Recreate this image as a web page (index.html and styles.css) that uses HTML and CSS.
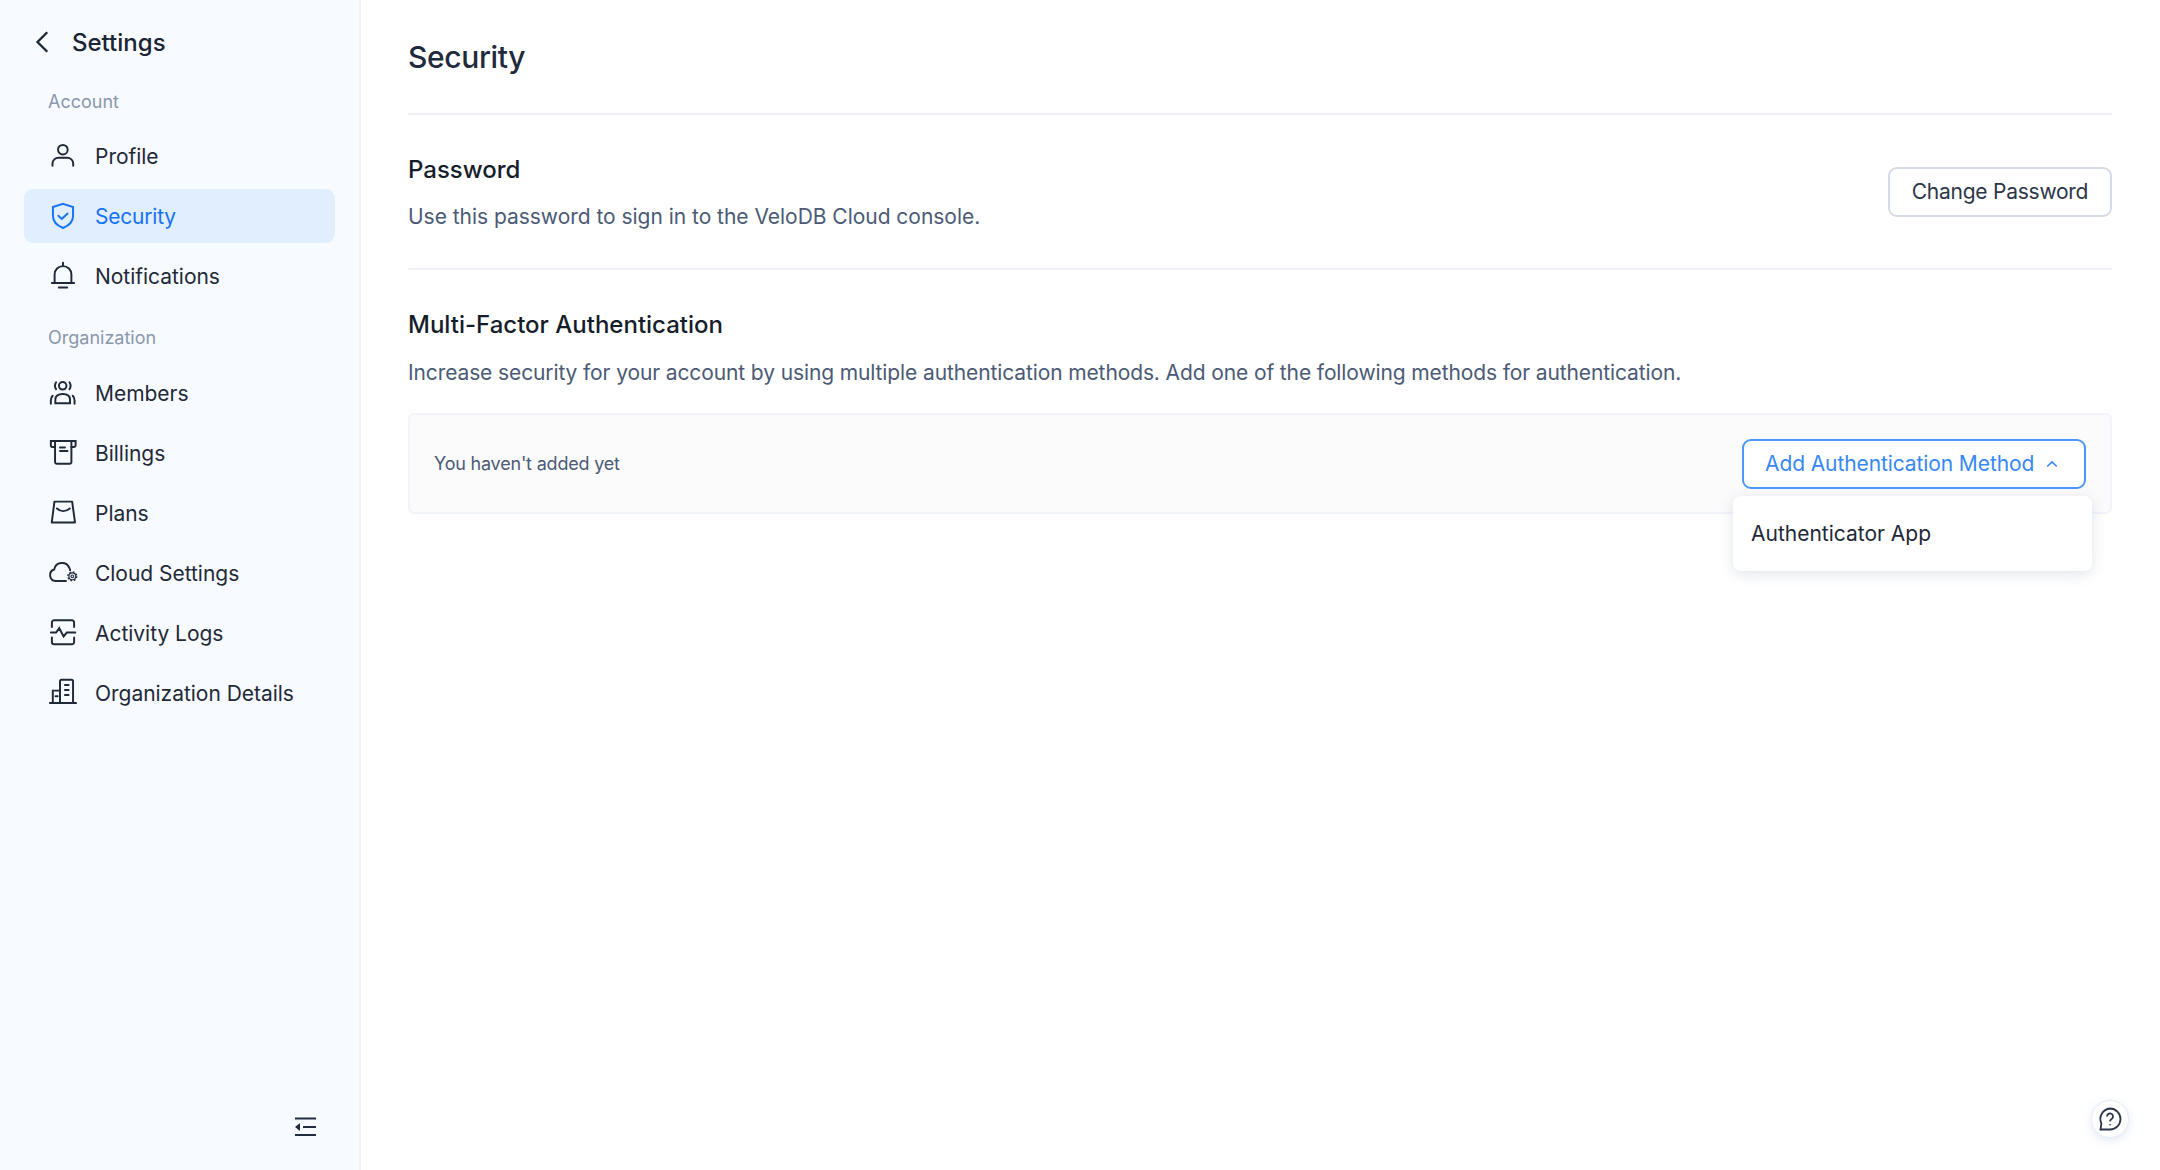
FILE: index.html
```html
<!DOCTYPE html>
<html lang="en">

<head>
    <meta name="viewport" content="width=device-width, initial-scale=1.0">
    <title>Security</title>
    <link rel="stylesheet" href="styles.css">
</head>

<body>
    <div class="page">
        <!-- Left navigation -->
        <aside class="sidebar">
            <div class="sidebar-head">
                <svg class="back-icon" viewBox="0 0 20 20"><path d="M13.5 3.5 7 10l6.500 6.500" /></svg>
                <span>Settings</span>
            </div>

            <div class="nav-label">Account</div>
            <a class="nav-item">
                <svg class="nav-icon" viewBox="0 0 20 20">
                    <circle cx="9.900" cy="5.800" r="3.200" />
                    <path d="M3 16.500V15a4 4 0 0 1 4-3.900h5.800a4 4 0 0 1 4 3.900v1.500" />
                </svg>
                Profile
            </a>
            <a class="nav-item active">
                <svg class="nav-icon" viewBox="0 0 20 20">
                    <path d="M10 1.900 16.700 4v6c0 4.200-3.500 6.700-6.700 8-3.200-1.300-6.700-3.800-6.700-8V4z" />
                    <path d="m6.900 9.800 2.300 2.100 3.900-3.500" />
                </svg>
                Security
            </a>
            <a class="nav-item">
                <svg class="nav-icon" viewBox="0 0 20 20">
                    <path d="M10 1.200v1.800M4.400 14.500V9a5.600 5.600 0 0 1 11.200 0v5.500M2.600 14.700h14.800M7.200 17.700h5.600" />
                </svg>
                Notifications
            </a>

            <div class="nav-label org">Organization</div>
            <a class="nav-item">
                <svg class="nav-icon" viewBox="0 0 20 20">
                    <circle cx="9.800" cy="5.200" r="2.500" />
                    <path d="M5.400 2.800c-.9 1.400-.9 3.300 0 4.700M14.300 2.800c.9 1.400.9 3.300 0 4.700" />
                    <path d="M4.900 16.800v-2.300c0-2.300 1.700-3.800 4.900-3.800s4.900 1.500 4.900 3.800v2.300z" />
                    <path d="M1.900 17.200v-2.400c0-1.200.4-2.200 1.200-3M17.700 17.200v-2.400c0-1.200-.4-2.200-1.200-3" />
                </svg>
                Members
            </a>
            <a class="nav-item">
                <svg class="nav-icon" viewBox="0 0 20 20">
                    <path d="M4.700 6H3a1.200 1.200 0 0 1-1.100-1.200V2h16.500v2.800A1.200 1.200 0 0 1 17.200 6h-1.600" />
                    <path d="M4.700 2v14a1.200 1.200 0 0 0 1.200 1.200h8.500a1.200 1.200 0 0 0 1.200-1.200V2" />
                    <path d="M8 6.300h3.300M8 8.600h5" />
                </svg>
                Billings
            </a>
            <a class="nav-item">
                <svg class="nav-icon" viewBox="0 0 20 20">
                    <path d="M4.300 2.400h11.800l1.900 13.900H2.500z" stroke-linejoin="round" />
                    <path d="M6 7c2.400 2.300 5.800 2.300 8.500 0" />
                </svg>
                Plans
            </a>
            <a class="nav-item">
                <svg class="nav-icon" viewBox="0 0 20 20">
                    <path d="M12 15.300H5A3.900 3.900 0 0 1 4.100 7.700a5.300 5.300 0 0 1 10.100-1.200c.3.600.5 1.100.5 1.600" />
                    <circle cx="16.200" cy="12.200" r=".9" stroke-width=".7" />
                    <circle cx="16.200" cy="12.200" r="2.300" stroke-width=".8" />
                    <circle cx="16.200" cy="12.200" r="3" stroke-width=".8" stroke-dasharray="1.200 1.150" stroke-linecap="butt" />
                </svg>
                Cloud Settings
            </a>
            <a class="nav-item">
                <svg class="nav-icon" viewBox="0 0 20 20">
                    <path d="M2.600 6V3a1.500 1.500 0 0 1 1.500-1.500h11.800A1.500 1.500 0 0 1 17.400 3v3M2.600 13v3a1.500 1.500 0 0 0 1.500 1.500h11.800a1.500 1.500 0 0 0 1.500-1.500v-3" />
                    <path d="M1.900 9.700h3.500l2.100-2.900 2.900 5.500 2.100-2.600h5.700" />
                </svg>
                Activity Logs
            </a>
            <a class="nav-item">
                <svg class="nav-icon" viewBox="0 0 20 20">
                    <path d="M1.300 16.700h17.400M3.200 16.700V8.400H8M8 16.700V2.200c0-.7.400-1.100 1-1.100h6.600c.7 0 1.100.4 1.100 1.100v14.500" />
                    <path d="M11.300 4.700h2.400M11.300 8h2.400M11.300 11.300h2.400M5 12.200h1.400" />
                </svg>
                Organization Details
            </a>

            <div class="sidebar-foot">
                <svg class="collapse-icon" viewBox="0 0 21 19">
                    <path d="M0 1.500h21M8 10h13M0 18h21" />
                    <path class="solid" d="M5 6v8l-5-4z" />
                </svg>
            </div>
        </aside>

        <main class="content">
            <h1 class="page-title">Security</h1>

            <section class="password-row">
                <div class="password-text">
                    <h2>Password</h2>
                    <p>Use this password to sign in to the VeloDB Cloud console.</p>
                </div>
                <button class="btn">Change Password</button>
            </section>

            <section class="mfa">
                <h2>Multi-Factor Authentication</h2>
                <p>Increase security for your account by using multiple authentication methods. Add one of the following methods for authentication.</p>
                <div class="mfa-box">
                    <span class="mfa-empty">You haven't added yet</span>
                    <div class="dropdown">
                        <button class="btn btn-primary">
                            <span>Add Authentication Method</span>
                            <svg class="caret" viewBox="0 0 14 9"><path d="M1.500 7.500 7 2l5.500 5.500" /></svg>
                        </button>
                        <div class="dropdown-menu">Authenticator App</div>
                    </div>
                </div>
            </section>
        </main>
    </div>

    <button class="help">
        <svg viewBox="0 0 24 24">
            <path d="M12 1.500a10.500 10.500 0 1 1 0 21H2.500l.9-6A10.500 10.500 0 0 1 12 1.500z" />
            <path d="M9 9.500a3 3 0 1 1 4.600 2.500c-1 .6-1.600 1.100-1.600 2.400" />
            <path d="M12 17.200v1" />
        </svg>
    </button>
</body>

</html>
```

FILE: styles.css
```css
* {
    box-sizing: border-box;
}

html,
body {
    margin: 0;
    height: 100%;
}

body {
    font-family: Inter, "Noto Sans", sans-serif;
    font-size: 21px;
    color: #1f2937;
    background: #fff;
}

.page {
    display: flex;
    height: 1170px;
    overflow: hidden;
}

/* Sidebar */
.sidebar {
    display: flex;
    flex-direction: column;
    flex: none;
    width: 361px;
    padding: 0 24px;
    background: #f7faff;
    border-right: 2px solid #eef2f8;
}

.sidebar-head {
    display: flex;
    align-items: center;
    gap: 15px;
    height: 84px;
    margin-left: 3px;
    font-size: 24px;
    font-weight: 500;
    color: #1b2433;
}

.back-icon {
    width: 30px;
    height: 30px;
    fill: none;
    stroke: #1b2433;
    stroke-width: 1.500;
}

.nav-label {
    height: 34px;
    line-height: 34px;
    margin-top: 1px;
    margin-bottom: 4px;
    padding-left: 24px;
    font-size: 18px;
    color: #8a97ad;
}

.nav-label.org {
    margin-top: 18px;
    margin-bottom: 5px;
}

.nav-item {
    display: flex;
    align-items: center;
    gap: 17px;
    height: 54px;
    margin: 6px 0 0;
    padding-left: 24px;
    border-radius: 9px;
    letter-spacing: -0.03px;
    color: #1f2937;
}

.nav-item.active {
    background: #e1eefe;
    letter-spacing: -0.2px;
    color: #1672fb;
}

.nav-icon {
    flex: none;
    width: 30px;
    height: 30px;
    fill: none;
    stroke: currentColor;
    stroke-width: 1.300;
    stroke-linecap: round;
}

.sidebar-foot {
    display: flex;
    justify-content: flex-end;
    margin-top: auto;
    padding: 0 19px 34px 0;
}

.collapse-icon {
    width: 21px;
    height: 19px;
    fill: none;
    stroke: #1f2d40;
    stroke-width: 2;
}

.collapse-icon .solid {
    fill: #1f2d40;
    stroke: none;
}

/* Main area */
.content {
    flex: 1;
    padding: 0 48px 0 47px;
}

.page-title {
    height: 115px;
    margin: 0;
    padding-top: 38px;
    line-height: 38px;
    font-size: 30px;
    font-weight: 500;
    letter-spacing: -0.35px;
    color: #1f2a3d;
    border-bottom: 2px solid #eef2f8;
}

h2 {
    margin: 0;
    font-size: 24px;
    line-height: 32px;
    font-weight: 500;
    color: #151d2b;
}

.content p {
    margin: 0;
    line-height: 32px;
    color: #4b5a75;
}

.password-row {
    display: flex;
    justify-content: space-between;
    align-items: center;
    height: 155px;
    border-bottom: 2px solid #eef2f8;
}

.password-text {
    padding-top: 4px;
}

.password-row p {
    margin-top: 15px;
    letter-spacing: -0.03px;
}

.mfa {
    padding-top: 39px;
}

.mfa p {
    margin-top: 16px;
    letter-spacing: -0.115px;
}

.mfa-box {
    display: flex;
    justify-content: space-between;
    align-items: center;
    height: 101px;
    margin-top: 24px;
    padding: 0 24px;
    background: #fbfbfc;
    border: 2px solid #f1f4f9;
    border-radius: 6px;
}

.mfa-empty {
    font-size: 18px;
    letter-spacing: -0.2px;
    color: #4b5a75;
}

.btn {
    display: inline-flex;
    align-items: center;
    justify-content: center;
    height: 50px;
    width: 224px;
    padding: 0;
    background: #fff;
    border: 2px solid #d5dbe6;
    border-radius: 9px;
    font: inherit;
    letter-spacing: -0.25px;
    white-space: nowrap;
    color: #2b3648;
}

.btn-primary {
    width: 344px;
    justify-content: flex-start;
    gap: 12px;
    padding-left: 21px;
    border-color: #4c97f8;
    letter-spacing: -0.1px;
    color: #3788f5;
}

.caret {
    width: 12px;
    height: 8px;
    fill: none;
    stroke: #3788f5;
    stroke-width: 1.800;
}

.dropdown {
    position: relative;
}

.dropdown-menu {
    position: absolute;
    top: 57px;
    left: -9px;
    width: 359px;
    height: 75px;
    padding: 0 18px;
    line-height: 75px;
    background: #fff;
    border-radius: 8px;
    box-shadow: 0 3px 14px rgba(60, 80, 120, 0.16);
    color: #1f2937;
}

/* Floating help button */
.help {
    position: fixed;
    left: 2091px;
    top: 1100px;
    display: flex;
    align-items: center;
    justify-content: center;
    width: 38px;
    height: 38px;
    padding: 0;
    background: #fff;
    border: 1px solid #e6ecf6;
    border-radius: 50%;
    box-shadow: 0 3px 10px rgba(90, 120, 190, 0.16);
}

.help svg {
    width: 24px;
    height: 24px;
    fill: none;
    stroke: #2a3548;
    stroke-width: 1.800;
}
```
